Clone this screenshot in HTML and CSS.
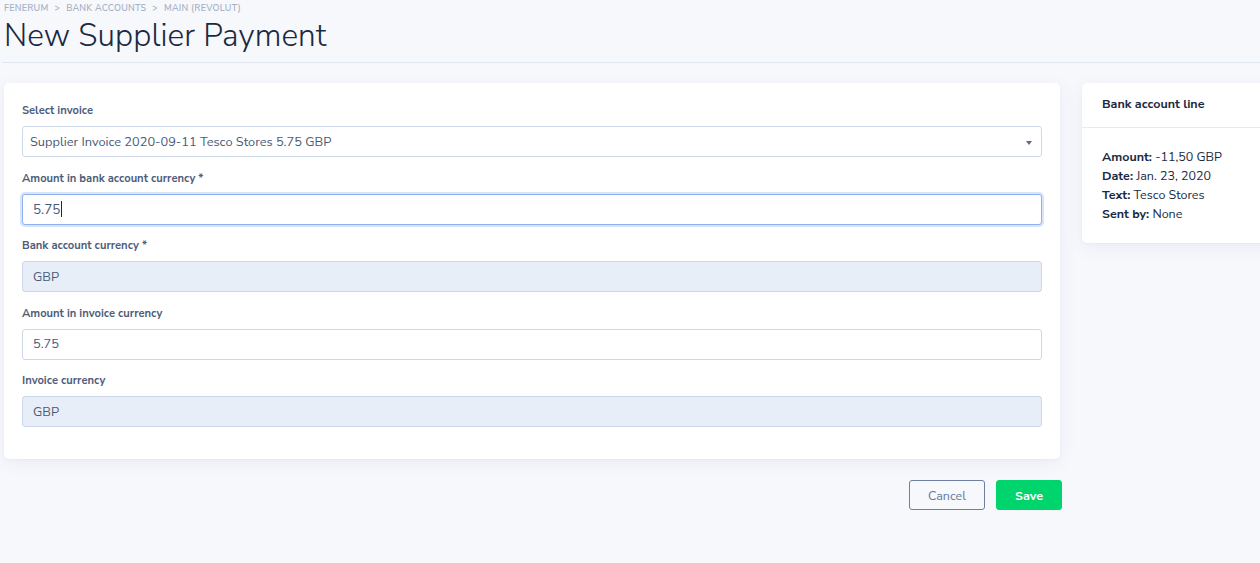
FILE: index.html
```html
<!DOCTYPE html>
<html lang="en">
<head>
<meta charset="utf-8">
<title>New Supplier Payment</title>
<link rel="stylesheet" href="styles.css">
</head>
<body>
<header class="page-head">
  <nav class="crumbs">
    <span>Fenerum</span><span class="sep">&gt;</span><span>Bank accounts</span><span class="sep">&gt;</span><span>Main (Revolut)</span>
  </nav>
  <h1 class="title">New Supplier Payment</h1>
</header>

<main class="layout">
  <section class="left">
    <form class="card form-card">
      <div class="group">
        <label class="label">Select invoice</label>
        <div class="field select">
          <span class="value">Supplier Invoice 2020-09-11 Tesco Stores 5.75 GBP</span>
          <span class="arrow"></span>
        </div>
      </div>
      <div class="group">
        <label class="label">Amount in bank account currency *</label>
        <div class="field focused"><span class="value">5.75</span><span class="caret"></span></div>
      </div>
      <div class="group">
        <label class="label">Bank account currency *</label>
        <div class="field disabled"><span class="value">GBP</span></div>
      </div>
      <div class="group">
        <label class="label">Amount in invoice currency</label>
        <div class="field"><span class="value">5.75</span></div>
      </div>
      <div class="group">
        <label class="label">Invoice currency</label>
        <div class="field disabled"><span class="value">GBP</span></div>
      </div>
    </form>
    <div class="actions">
      <button class="btn btn-cancel" type="button">Cancel</button>
      <button class="btn btn-save" type="button">Save</button>
    </div>
  </section>

  <aside class="card side-card">
    <div class="side-head">Bank account line</div>
    <div class="side-body">
      <p><b>Amount:</b> -11,50 GBP</p>
      <p><b>Date:</b> Jan. 23, 2020</p>
      <p><b>Text:</b> Tesco Stores</p>
      <p><b>Sent by:</b> None</p>
    </div>
  </aside>
</main>
</body>
</html>
```

FILE: styles.css
```css
* { box-sizing: border-box; }

html, body {
  margin: 0;
  padding: 0;
}

body {
  background: #f7f8fc;
  font-family: "Nunito Sans", Lato, "Open Sans", sans-serif;
  color: #1b2a41;
  width: 1260px;
  height: 563px;
  overflow: hidden;
}

.page-head {
  margin-left: 2px;
  padding-left: 2px;
  border-bottom: 1px solid #dfe6f0;
  height: 63px;
}

.crumbs {
  font-size: 9px;
  letter-spacing: 0.25px;
  text-transform: uppercase;
  color: #a5b2c6;
  font-weight: 600;
  line-height: 14px;
  padding-top: 1px;
}

.crumbs .sep {
  margin: 0 6px;
}

.title {
  margin: 2px 0 0;
  font-size: 31.5px;
  font-weight: 300;
  line-height: 38px;
  color: #1b2a41;
  letter-spacing: 0.1px;
}

.layout {
  display: flex;
  align-items: flex-start;
  gap: 22px;
  padding-top: 20px;
  padding-left: 4px;
}

.left {
  flex: 0 0 1056px;
}

.card {
  background: #fff;
  border-radius: 5px;
  box-shadow: 0 4px 18px rgba(60, 80, 130, 0.07), 0 1px 3px rgba(60, 80, 130, 0.04);
}

.form-card {
  display: block;
  padding: 21px 18px 18px;
}

.group {
  margin-bottom: 14.5px;
}

.group:last-child {
  margin-bottom: 14px;
}

.label {
  display: block;
  font-size: 11.2px;
  font-weight: 700;
  color: #4f5e7b;
  line-height: 14px;
  margin-bottom: 8px;
}

.field {
  display: flex;
  align-items: center;
  height: 31px;
  border: 1px solid #cdd8e8;
  border-radius: 3px;
  padding: 0 10px;
  font-size: 12.8px;
  color: #4a5a78;
  background: #fff;
}

.field.disabled {
  background: #e8eef7;
  border-color: #cbd6e6;
}

.field.focused {
  border-color: #8db0ee;
  box-shadow: 0 0 0 2px #d7e4fb;
  font-size: 13.5px;
}

.select .value { flex: 1; }
.select { padding-left: 7px; }

.arrow {
  width: 0;
  height: 0;
  border-left: 3px solid transparent;
  border-right: 3px solid transparent;
  border-top: 4px solid #5c6b86;
  margin-right: -1px;
  margin-top: 2px;
}

.caret {
  display: inline-block;
  width: 1px;
  height: 16px;
  background: #1b2a41;
  margin-left: 1px;
}

.actions {
  display: flex;
  justify-content: flex-end;
  gap: 11px;
  margin-top: 21px;
  margin-right: -2px;
}

.btn {
  height: 30px;
  border-radius: 3px;
  font-family: inherit;
  font-size: 12.5px;
  cursor: pointer;
}

.btn-cancel {
  width: 76px;
  background: transparent;
  border: 1px solid #6c7fa0;
  color: #66789a;
}

.btn-save {
  width: 66px;
  background: #00d46c;
  border: 1px solid #00d46c;
  color: #fff;
  font-weight: 700;
}

.side-card {
  flex: 0 0 220px;
  border-radius: 5px 0 0 5px;
}

.side-head {
  height: 45px;
  display: flex;
  align-items: center;
  padding-left: 20px;
  padding-bottom: 3px;
  font-size: 12.5px;
  font-weight: 700;
  color: #1b2a41;
  border-bottom: 1px solid #e6ebf3;
}

.side-body {
  padding: 19px 20px 20px;
  font-size: 12.5px;
  line-height: 19px;
  color: #1b2a41;
}

.side-body p {
  margin: 0;
}

.side-body b {
  font-weight: 700;
}
```
